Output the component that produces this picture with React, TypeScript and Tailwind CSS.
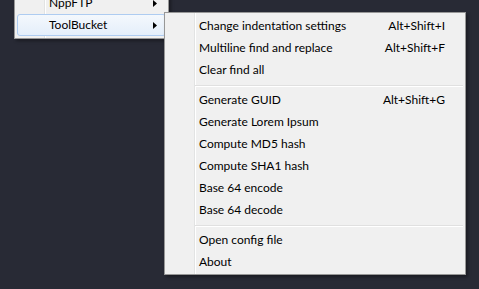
const GUTTER =
  'bg-[linear-gradient(to_right,#f0f0f0_29px,#e2e3e3_29px,#e2e3e3_30px,#ffffff_30px,#ffffff_31px,#f0f0f0_31px)]';

type Item = { label: string; shortcut?: string } | 'sep';

const ITEMS: Item[] = [
  { label: 'Change indentation settings', shortcut: 'Alt+Shift+I' },
  { label: 'Multiline find and replace', shortcut: 'Alt+Shift+F' },
  { label: 'Clear find all' },
  'sep',
  { label: 'Generate GUID', shortcut: 'Alt+Shift+G' },
  { label: 'Generate Lorem Ipsum' },
  { label: 'Compute MD5 hash' },
  { label: 'Compute SHA1 hash' },
  { label: 'Base 64 encode' },
  { label: 'Base 64 decode' },
  'sep',
  { label: 'Open config file' },
  { label: 'About' },
];

function Arrow() {
  return (
    <svg width="4" height="7" viewBox="0 0 4 7" className="block">
      <polygon points="0,0 4,3.5 0,7" fill="#000" />
    </svg>
  );
}

export default function App() {
  return (
    <div className="relative w-[479px] h-[289px] overflow-hidden bg-[#282a35] font-['Lato',sans-serif] text-[12px] text-black">
      {/* parent menu, top cut off */}
      <div
        className={`absolute left-[14px] top-[-11px] w-[155px] border border-[#979797] pt-[2px] pb-[2px] shadow-[2px_2px_3px_rgba(0,0,0,0.35)] ${GUTTER}`}
      >
        <div className="flex h-[22px] items-center justify-between pl-[34px] pr-[11px]">
          <span>NppFTP</span>
          <Arrow />
        </div>
        <div className="mx-[2px] flex h-[22px] items-center justify-between rounded-[3px] border border-[#aeccf1] bg-gradient-to-b from-[#f4f8fd] to-[#e4eefa] pl-[31px] pr-[8px]">
          <span>ToolBucket</span>
          <Arrow />
        </div>
      </div>

      {/* ToolBucket submenu */}
      <div
        className={`absolute left-[164px] top-[12px] w-[302px] border border-[#979797] pt-[2px] pb-[1px] shadow-[2px_2px_3px_rgba(0,0,0,0.35)] ${GUTTER}`}
      >
        {ITEMS.map((it, i) =>
          it === 'sep' ? (
            <div key={i} className="ml-[30px] mr-[2px] h-[8px] pt-[4px]">
              <div className="border-t border-b border-t-[#e0e0e0] border-b-white" />
            </div>
          ) : (
            <div key={i} className="flex h-[22px] items-center justify-between pl-[34px] pr-[20px]">
              <span>{it.label}</span>
              {it.shortcut && <span>{it.shortcut}</span>}
            </div>
          )
        )}
      </div>
    </div>
  );
}
